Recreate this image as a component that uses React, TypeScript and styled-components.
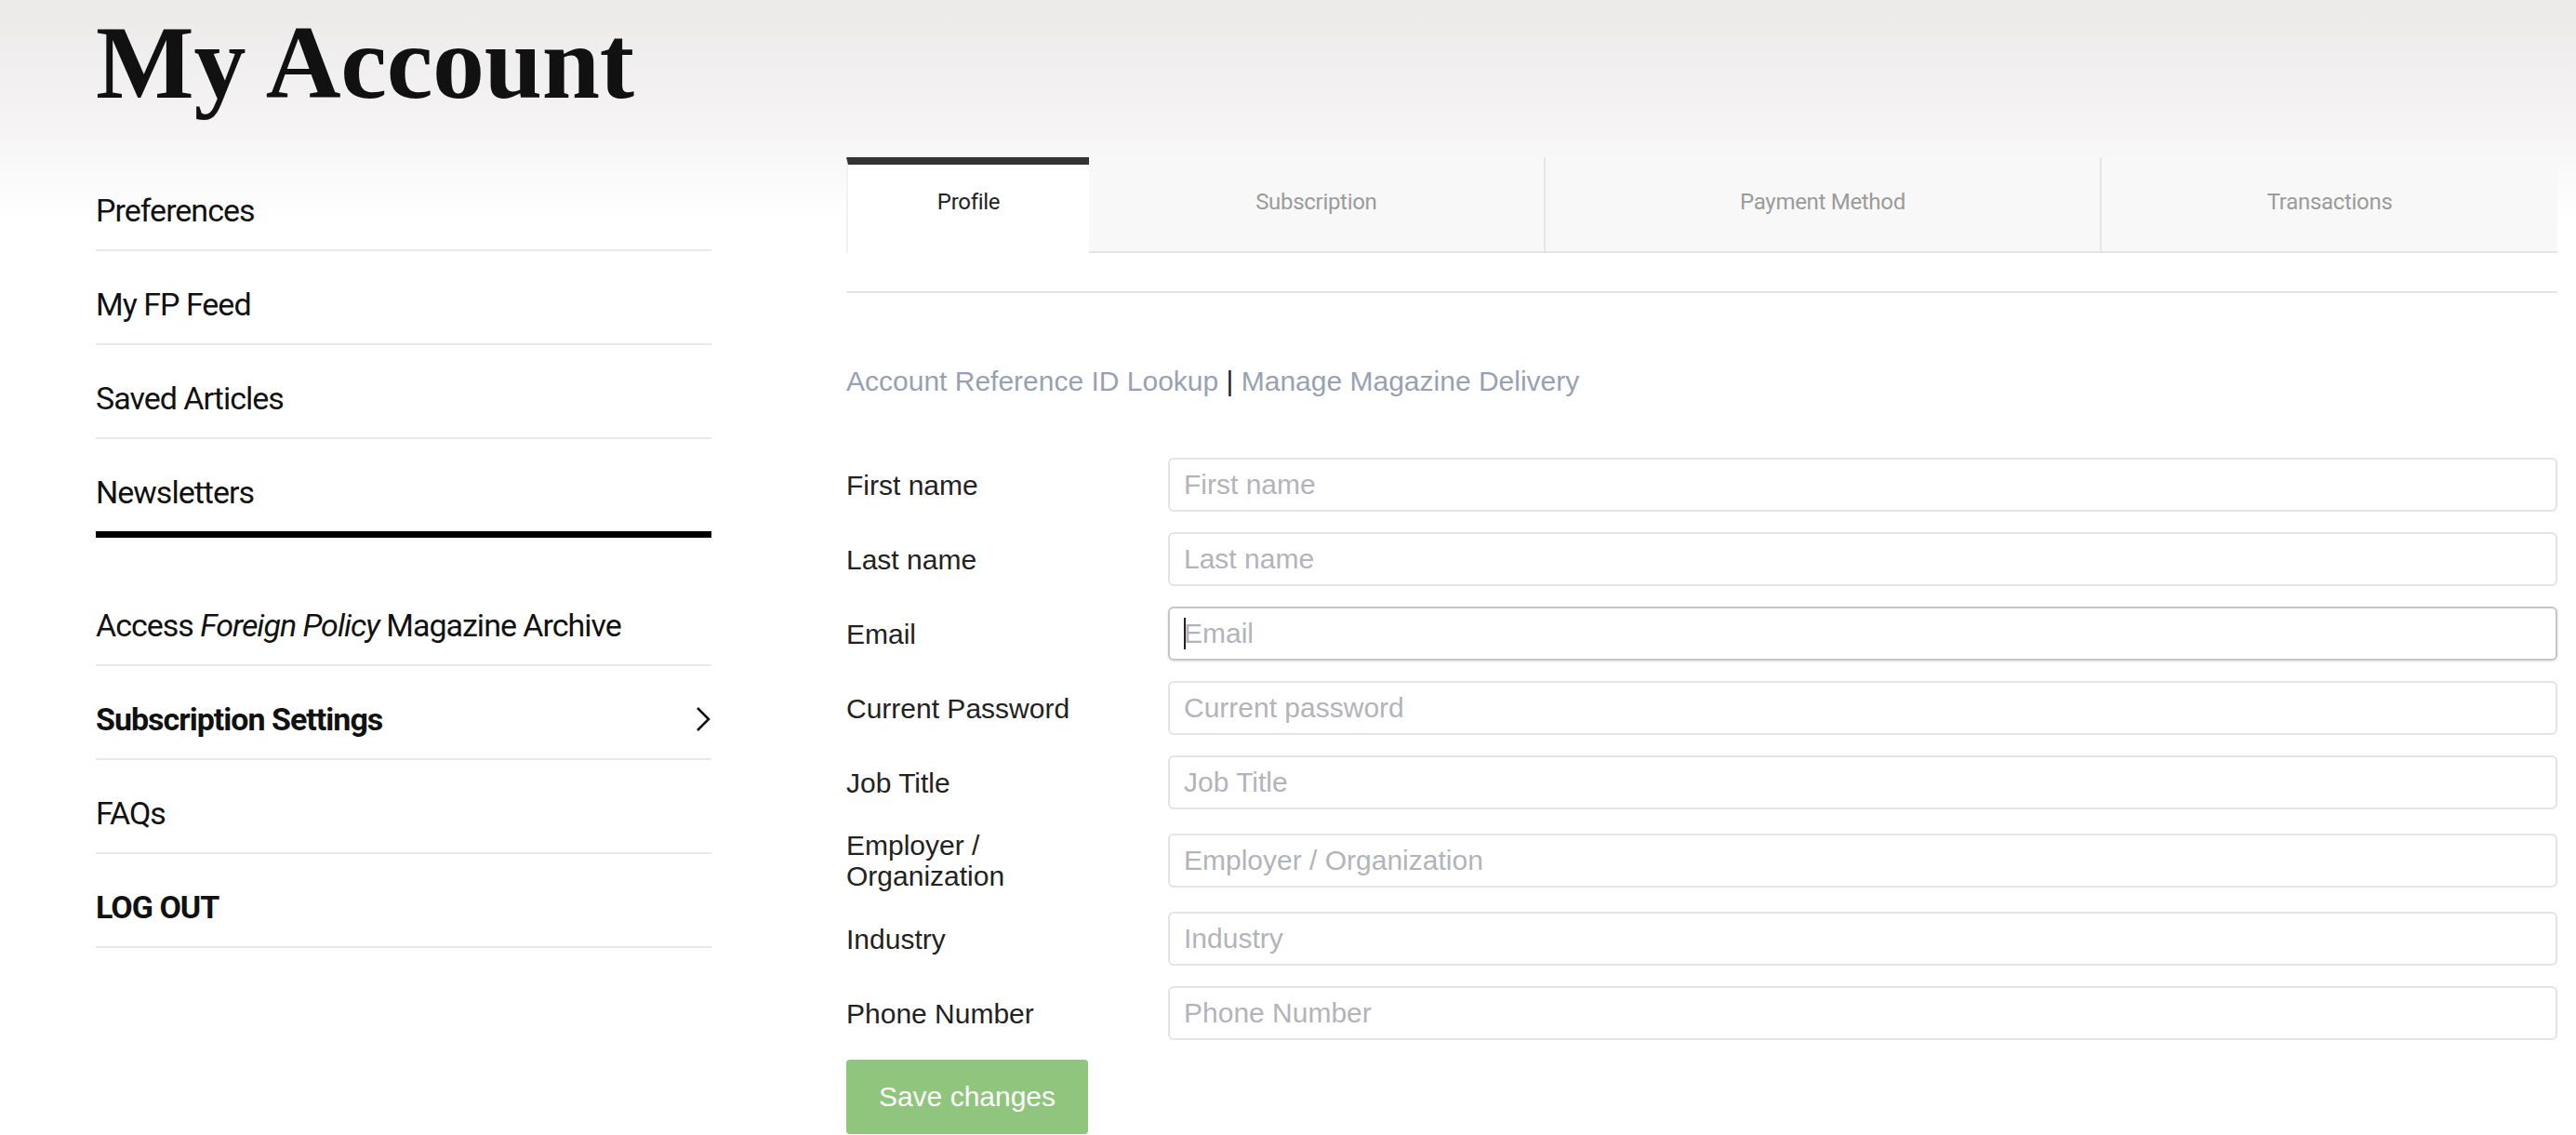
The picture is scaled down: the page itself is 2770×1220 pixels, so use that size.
import styled, { createGlobalStyle } from 'styled-components'

const GlobalStyle = createGlobalStyle`
  html, body {
    margin: 0;
    padding: 0;
  }
  body {
    background: linear-gradient(to bottom, #ebeae9 0px, #f5f3f4 130px, #ffffff 240px) no-repeat #fff;
    min-height: 1220px;
  }
  * {
    box-sizing: border-box;
  }
`

const Page = styled.div`
  width: 2770px;
  padding: 0 20px 0 103px;
`

const Header = styled.header`
  height: 169px;
  padding-top: 11px;
`

const Title = styled.h1`
  margin: 0;
  font-family: "Liberation Serif", "Times New Roman", serif;
  font-weight: 700;
  font-size: 112px;
  line-height: 112px;
  letter-spacing: -0.3px;
  color: #111;
`

const Layout = styled.div`
  display: grid;
  grid-template-columns: 662px 1fr;
  column-gap: 145px;
  align-items: start;
`

const Sidebar = styled.nav`
  display: flex;
  flex-direction: column;
`

const NavGroup = styled.div<{ $spaced?: boolean }>`
  display: flex;
  flex-direction: column;
  margin-top: ${p => (p.$spaced ? '37px' : '0')};
`

const NavItem = styled.a<{ $bold?: boolean; $heavy?: boolean }>`
  display: flex;
  align-items: center;
  justify-content: space-between;
  padding: 37px 0 22px;
  font-family: Roboto, "Liberation Sans", sans-serif;
  font-size: 34px;
  line-height: 40px;
  letter-spacing: -1px;
  font-weight: ${p => (p.$bold ? 700 : 400)};
  color: #111;
  text-decoration: none;
  border-bottom: ${p => (p.$heavy ? '7px solid #000' : '2px solid #e8e8e8')};

  em {
    font-style: italic;
  }
`

const Chevron = () => (
  <svg width="18" height="26" viewBox="0 0 18 26" fill="none">
    <polyline points="3,1 15,13 3,25" stroke="#111" strokeWidth="2.6" strokeLinejoin="miter" />
  </svg>
)

const Main = styled.main`
  display: flex;
  flex-direction: column;
`

const TabBar = styled.div`
  display: grid;
  grid-template-columns: 261px 489fr 599fr 492fr;
  height: 103px;
`

const Tab = styled.div<{ $active?: boolean; $divider?: boolean }>`
  height: 103px;
  padding-top: ${p => (p.$active ? '25px' : '33px')};
  text-align: center;
  font-family: Roboto, "Liberation Sans", sans-serif;
  font-size: 24px;
  line-height: 30px;
  letter-spacing: -0.3px;
  background: ${p => (p.$active ? '#fff' : '#f8f8f8')};
  color: ${p => (p.$active ? '#222' : '#9b9b9b')};
  border-top: ${p => (p.$active ? '8px solid #333' : 'none')};
  border-bottom: ${p => (p.$active ? 'none' : '2px solid #e3e3e3')};
  border-left: ${p =>
    p.$divider ? '2px solid #e6e6e6' : p.$active ? '2px solid #f1f1f1' : 'none'};
  cursor: pointer;
`

const Rule = styled.div`
  margin-top: 41px;
  height: 2px;
  background: #e4e4e4;
`

const LinkLine = styled.p`
  margin: 77px 0 64px;
  font-family: "Liberation Sans", Arial, sans-serif;
  font-size: 30px;
  line-height: 36px;
  color: #222;
`

const SoftLink = styled.a`
  color: #98a1b3;
  text-decoration: none;
`

const Form = styled.form`
  display: flex;
  flex-direction: column;
  gap: 22px;
`

const Row = styled.div`
  display: grid;
  grid-template-columns: 346px 1fr;
  align-items: center;
  min-height: 58px;
`

const Label = styled.label`
  max-width: 270px;
  font-family: "Liberation Sans", Arial, sans-serif;
  font-size: 30px;
  line-height: 33px;
  color: #222;
`

const FieldWrap = styled.div`
  position: relative;
`

const Caret = styled.span`
  position: absolute;
  left: 17px;
  top: 12px;
  width: 2px;
  height: 34px;
  background: #222;
`

const Field = styled.input<{ $focused?: boolean }>`
  display: block;
  width: 100%;
  height: 58px;
  padding: 0 15px;
  border-radius: 6px;
  border: 2px solid ${p => (p.$focused ? '#c6c6c6' : '#e3e3e8')};
  box-shadow: ${p => (p.$focused ? '0 1px 3px rgba(0, 0, 0, 0.12)' : 'none')};
  background: #fff;
  font-family: "Liberation Sans", Arial, sans-serif;
  font-size: 30px;
  color: #222;
  outline: none;
  caret-color: transparent;

  &::placeholder {
    color: #b3b3ba;
  }
`

const SaveButton = styled.button`
  width: 260px;
  height: 80px;
  margin-top: -1px;
  border: none;
  border-radius: 4px;
  background: #8fc57d;
  color: #fff;
  font-family: "Liberation Sans", Arial, sans-serif;
  font-size: 30px;
  cursor: pointer;
`

const fields = [
  { id: 'first', label: 'First name', placeholder: 'First name' },
  { id: 'last', label: 'Last name', placeholder: 'Last name' },
  { id: 'email', label: 'Email', placeholder: 'Email', focused: true },
  { id: 'password', label: 'Current Password', placeholder: 'Current password', type: 'password' },
  { id: 'job', label: 'Job Title', placeholder: 'Job Title' },
  { id: 'employer', label: 'Employer / Organization', placeholder: 'Employer / Organization' },
  { id: 'industry', label: 'Industry', placeholder: 'Industry' },
  { id: 'phone', label: 'Phone Number', placeholder: 'Phone Number' },
]

const App = () => {
  return (
    <>
      <GlobalStyle />
      <Page>
        <Header>
          <Title>My Account</Title>
        </Header>
        <Layout>
          <Sidebar>
            <NavGroup>
              <NavItem href="#">Preferences</NavItem>
              <NavItem href="#">My FP Feed</NavItem>
              <NavItem href="#">Saved Articles</NavItem>
              <NavItem href="#" $heavy>Newsletters</NavItem>
            </NavGroup>
            <NavGroup $spaced>
              <NavItem href="#">
                <span>
                  Access <em>Foreign Policy</em> Magazine Archive
                </span>
              </NavItem>
              <NavItem href="#" $bold>
                Subscription Settings
                <Chevron />
              </NavItem>
              <NavItem href="#">FAQs</NavItem>
              <NavItem href="#" $bold>LOG OUT</NavItem>
            </NavGroup>
          </Sidebar>

          <Main>
            <TabBar>
              <Tab $active>Profile</Tab>
              <Tab>Subscription</Tab>
              <Tab $divider>Payment Method</Tab>
              <Tab $divider>Transactions</Tab>
            </TabBar>
            <Rule />
            <LinkLine>
              <SoftLink href="#">Account Reference ID Lookup</SoftLink> |{' '}
              <SoftLink href="#">Manage Magazine Delivery</SoftLink>
            </LinkLine>
            <Form onSubmit={e => e.preventDefault()}>
              {fields.map(f => (
                <Row key={f.id}>
                  <Label htmlFor={f.id}>{f.label}</Label>
                  <FieldWrap>
                    <Field
                      id={f.id}
                      type={f.type ?? 'text'}
                      placeholder={f.placeholder}
                      $focused={f.focused}
                    />
                    {f.focused && <Caret />}
                  </FieldWrap>
                </Row>
              ))}
              <div>
                <SaveButton type="submit">Save changes</SaveButton>
              </div>
            </Form>
          </Main>
        </Layout>
      </Page>
    </>
  )
}

export default App
